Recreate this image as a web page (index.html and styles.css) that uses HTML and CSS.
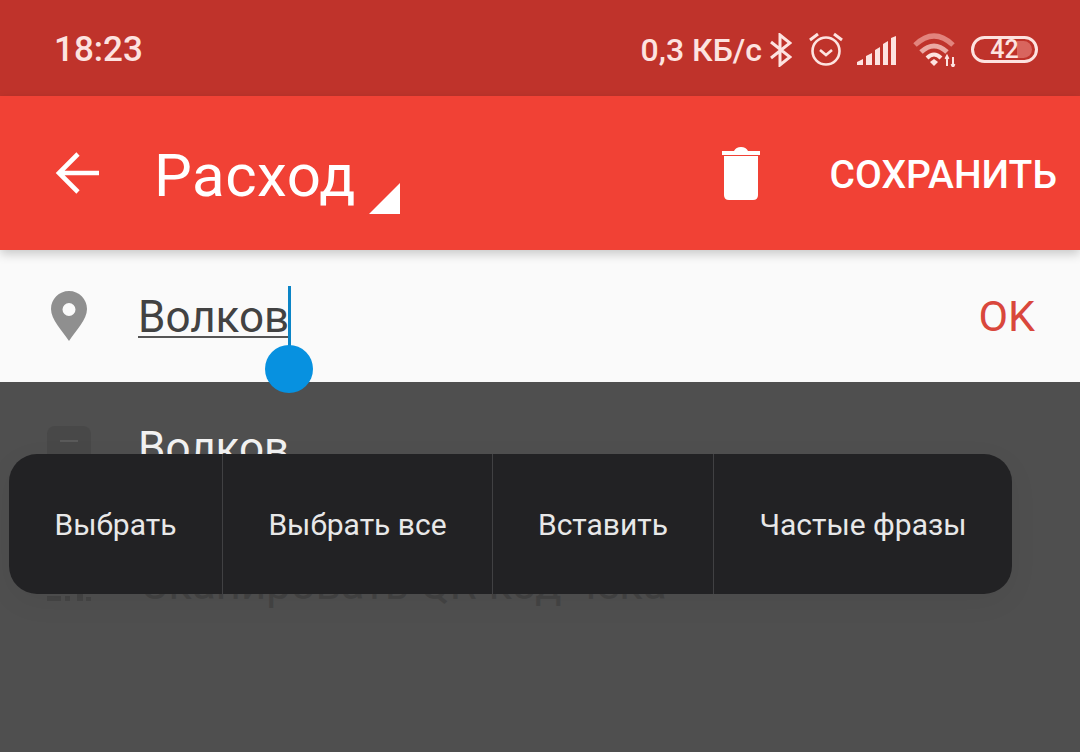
FILE: index.html
```html
<!DOCTYPE html>
<html>
    <head>
    <title>Расход</title>
    <link rel="stylesheet" href="styles.css">
    </head>
    <body>
    <div id="screen">
        <div id="status">
            <span class="clock">18:23</span>
            <div class="indicators">
                <span class="speed">0,3 КБ/с</span>
                <svg class="ic-bt" width="22" height="34" viewBox="0 0 22 34">
                    <path d="M1 9 L20 24 L10 32 V2 L20 10 L1 25" fill="none" stroke="#fde3e0" stroke-width="3"/>
                </svg>
                <svg class="ic-alarm" width="36" height="36" viewBox="0 0 36 36">
                    <circle cx="18" cy="19" r="13.5" fill="none" stroke="#fde3e0" stroke-width="2.6"/>
                    <path d="M12 18 L18 23 L24 18" fill="none" stroke="#fde3e0" stroke-width="2.6"/>
                    <path d="M2 8 L10 2 M34 8 L26 2" fill="none" stroke="#fde3e0" stroke-width="3"/>
                </svg>
                <svg class="ic-signal" width="42" height="30" viewBox="0 0 42 30">
                    <path d="M1 29 V26 L7 23 V29 Z M10 29 V20 L16 17 V29 Z M19 29 V14 L24 11 V29 Z M27 29 V8 L32 5 V29 Z M35 29 V2 L40 0 V29 Z" fill="#fde3e0"/>
                </svg>
                <svg class="ic-wifi" width="46" height="34" viewBox="0 0 46 34">
                    <path d="M2 12 Q21 -6 40 12" fill="none" stroke="#e2847d" stroke-width="5"/>
                    <path d="M8 19 Q21 7 34 19" fill="none" stroke="#eba9a3" stroke-width="5"/>
                    <path d="M14 25 Q21 18 28 25" fill="none" stroke="#fde3e0" stroke-width="4"/>
                    <path d="M17 29 L21 26 L25 29 L21 33 Z" fill="#fde3e0"/>
                    <path d="M34 24 V33 M32.5 26 L34 23 L35.5 26 M40 24 V33 M38.5 31 L40 34 L41.5 31" fill="none" stroke="#fde3e0" stroke-width="2"/>
                </svg>
                <div class="battery"><div class="level"></div><span>42</span></div>
            </div>
        </div>
        <div id="toolbar">
            <svg class="ic-back" width="46" height="44" viewBox="0 0 46 44">
                <path d="M44 22 H5 M23 3 L4 22 L23 41" fill="none" stroke="#fff" stroke-width="4.6"/>
            </svg>
            <div class="title">Расход</div>
            <div class="corner"></div>
            <svg class="ic-trash" width="40" height="54" viewBox="0 0 40 54">
                <path d="M1 4 H13 Q15 0 20 0 Q25 0 27 4 H39 V8 H1 Z" fill="#fff"/>
                <path d="M3 9 H37 V48 Q37 53 32 53 H8 Q3 53 3 48 Z" fill="#fff"/>
            </svg>
            <div class="save">СОХРАНИТЬ</div>
        </div>
        <div id="input-row">
            <svg class="ic-pin" width="36" height="50" viewBox="0 0 36 50">
                <path fill-rule="evenodd" d="M18 0 C8 0 0 8 0 18 C0 29 11 39 18 50 C25 39 36 29 36 18 C36 8 28 0 18 0 Z M18 12 A6.5 6.5 0 1 1 18 25 A6.5 6.5 0 1 1 18 12 Z" fill="#8f8f8f"/>
            </svg>
            <div class="value">Волков<div class="handle"></div></div>
            <div class="ok">OK</div>
        </div>
        <div id="dimmed">
            <div class="row">
                <svg class="ic-dim" width="44" height="44" viewBox="0 0 44 44">
                    <rect width="44" height="44" rx="8" fill="#484848"/>
                    <rect x="13" y="14" width="18" height="2" fill="#5a5a5a"/>
                </svg>
                <div class="name">Волков</div>
            </div>
            <div class="row">
                <svg class="ic-dim" width="44" height="44" viewBox="0 0 44 44">
                    <path d="M0 38 H14 V43 H0 Z M18 38 H23 V43 H18 Z M30 36 H36 V43 H30 Z M39 39 H44 V43 H39 Z" fill="#444"/>
                </svg>
                <div class="name low">Сканировать QR-код чека</div>
            </div>
        </div>
        <div id="menu">
            <div class="item first">Выбрать</div>
            <div class="item second">Выбрать все</div>
            <div class="item third">Вставить</div>
            <div class="item last">Частые фразы</div>
        </div>
    </div>
    </body>
</html>
```

FILE: styles.css
```css
html, body {
    margin: 0;
    padding: 0;
}
#screen {
    position: relative;
    width: 1080px;
    height: 752px;
    overflow: hidden;
    display: flex;
    flex-direction: column;
    background-color: #4f4f4f;
    font-family: Roboto, sans-serif;
}
#status {
    height: 96px;
    flex: none;
    display: flex;
    align-items: center;
    justify-content: space-between;
    padding: 3px 42px 0 54px;
    box-sizing: border-box;
    background-color: #bf332b;
    color: #fde3e0;
}
.clock {
    font-size: 35px;
    font-weight: 500;
}
.indicators {
    display: flex;
    align-items: center;
}
.speed {
    font-size: 32px;
    font-weight: 500;
    margin-right: 8px;
}
.ic-alarm {
    margin-left: 16px;
}
.ic-signal {
    margin-left: 12px;
    margin-top: 2px;
}
.ic-wifi {
    margin-left: 15px;
}
.battery {
    position: relative;
    width: 67px;
    height: 27px;
    margin-left: 12px;
    box-sizing: border-box;
    border: 3px solid #fde3e0;
    border-radius: 14px;
    display: flex;
    align-items: center;
    justify-content: center;
    font-size: 25px;
    font-weight: 500;
    overflow: hidden;
}
.battery .level {
    position: absolute;
    left: 43px;
    top: 2px;
    bottom: 2px;
    width: 15px;
    border-radius: 0 9px 9px 0;
    background-color: #d8655e;
}
.battery span {
    position: relative;
}
#toolbar {
    position: relative;
    z-index: 1;
    height: 154px;
    flex: none;
    display: flex;
    align-items: center;
    background-color: #f14135;
    box-shadow: 0 4px 10px rgba(0, 0, 0, 0.2);
    color: #fff;
}
.ic-back {
    margin-left: 55px;
}
.title {
    margin: 5px 0 0 53px;
    font-size: 60px;
    line-height: 68px;
    letter-spacing: 0.5px;
}
.corner {
    width: 0;
    height: 0;
    margin: 50px 0 0 13px;
    border-left: 31px solid transparent;
    border-bottom: 31px solid #fff;
}
.ic-trash {
    margin-left: auto;
    margin-top: 2px;
}
.save {
    margin: 3px 23px 0 69px;
    font-size: 39px;
    font-weight: 500;
}
#input-row {
    height: 132px;
    flex: none;
    display: flex;
    align-items: center;
    background-color: #fafafa;
}
.ic-pin {
    margin-left: 51px;
}
.value {
    position: relative;
    margin: 4px 0 0 51px;
    font-size: 44px;
    line-height: 38px;
    color: #424242;
    border-bottom: 2px solid #555;
}
.handle {
    position: absolute;
    right: -2px;
    top: -12px;
    width: 3px;
    height: 70px;
    background-color: #0b84c6;
}
.handle::after {
    content: "";
    position: absolute;
    left: -23px;
    top: 59px;
    width: 48px;
    height: 48px;
    border-radius: 50%;
    background-color: #0791e0;
}
.ok {
    margin-left: auto;
    margin-right: 45px;
    font-size: 43px;
    color: #d9473c;
}
#dimmed {
    flex: 1;
}
.row {
    height: 132px;
    display: flex;
    align-items: center;
}
.ic-dim {
    margin-left: 47px;
}
.name {
    margin-left: 47px;
    font-size: 44px;
    color: #f2f2f2;
}
.name.low {
    margin: 8px 0 0 49px;
    font-size: 43.7px;
    color: #434343;
}
#menu {
    position: absolute;
    left: 9px;
    top: 454px;
    width: 1003px;
    height: 140px;
    display: flex;
    border-radius: 28px;
    background-color: #222224;
    box-shadow: 0 8px 30px rgba(0, 0, 0, 0.05);
    color: #e8e8e8;
    font-size: 30px;
}
.item {
    display: flex;
    align-items: center;
    justify-content: center;
    box-sizing: border-box;
    border-right: 1px solid #414143;
}
.first { width: 214px; }
.second { width: 270px; }
.third { width: 221px; }
.last { flex: 1; border-right: none; }
```
